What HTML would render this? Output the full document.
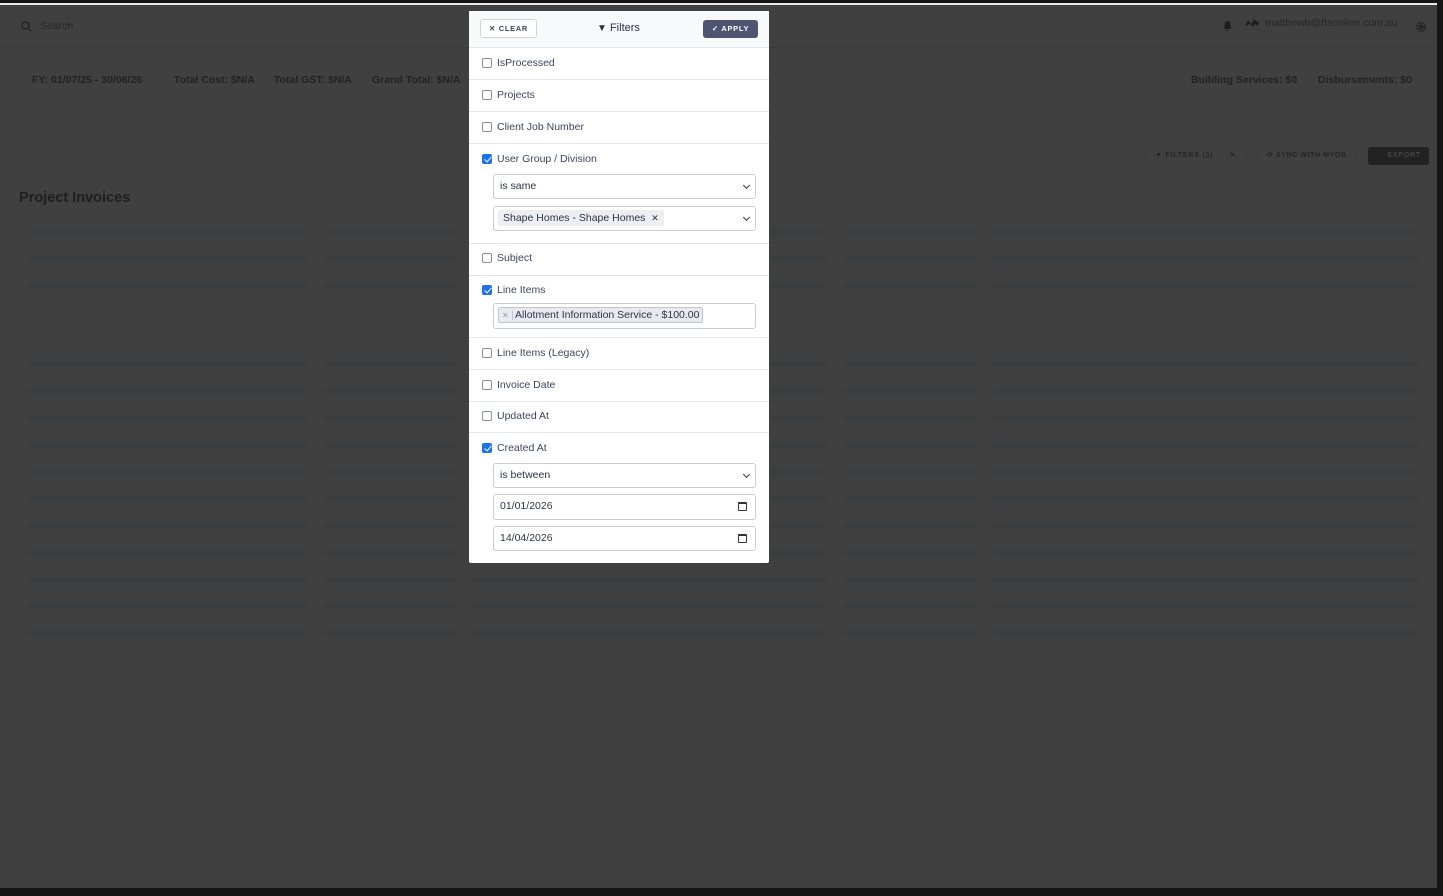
<!DOCTYPE html>
<html><head><meta charset="utf-8"><style>
*{box-sizing:border-box;margin:0;padding:0}
body{width:1443px;height:896px;background:#404040;font-family:"Liberation Sans",sans-serif;position:relative;overflow:hidden}
.a{position:absolute}
.bar{position:absolute;height:6px;border-radius:3px;background:#3c3d3f}
.sep{position:absolute;left:20px;width:1400px;height:1px;background:#3d3d3d}
.t{position:absolute;font-size:10.5px;font-weight:bold;color:#222;white-space:nowrap}
.m{position:absolute;left:469px;top:11px;width:300px;height:552px;background:#fff;border-radius:2px}
.row{position:absolute;left:0;width:300px;border-top:1px solid #e3e6ec}
.cb{position:absolute;left:13px;width:10px;height:10px;border:1px solid #8a8f99;border-radius:2px;background:#fff}
.cb.on{background:#1a73e8;border-color:#1a73e8}
.cb.on:after{content:"";position:absolute;left:2.5px;top:0px;width:3px;height:6px;border:solid #fff;border-width:0 1.5px 1.5px 0;transform:rotate(40deg)}
.lb{position:absolute;left:28px;font-size:10.5px;color:#3e4558;white-space:nowrap}
.inp{position:absolute;left:24px;width:263px;height:25px;border:1px solid #c9ccd3;border-radius:3px;font-size:10.5px;color:#2d3344;padding:0 6px;line-height:23px}
.chev{position:absolute;right:6px;top:8px;width:5px;height:5px;border:solid #333;border-width:0 1.3px 1.3px 0;transform:rotate(45deg)}
.cal{position:absolute;right:8px;top:7px;width:9px;height:9px;border:1.3px solid #333;border-top-width:2.5px;border-radius:1px}
</style></head><body>
<div class="a" style="left:0;top:0;width:1443px;height:3px;background:#151515"></div>
<div class="a" style="left:0;top:3px;width:1437px;height:2px;background:#e8e8e8"></div>
<div class="a" style="left:1437px;top:0;width:6px;height:896px;background:#151515"></div>
<div class="a" style="left:0;top:888px;width:1443px;height:8px;background:#151515"></div>

<svg class="a" style="left:21px;top:21px" width="11" height="11" viewBox="0 0 11 11"><circle cx="4.5" cy="4.5" r="3.5" fill="none" stroke="#222" stroke-width="1.3"/><path d="M7 7l3 3" stroke="#222" stroke-width="1.3"/></svg>
<div class="a" style="left:40px;top:20px;font-size:10.5px;color:#262626">Search</div>
<div class="a" style="left:0;top:47px;width:1437px;height:1px;background:#3b3b3b"></div>
<svg class="a" style="left:1222px;top:20px" width="11" height="12" viewBox="0 0 11 12"><path d="M5.5 1C3.5 1 2.5 2.5 2.5 4.5V7.5L1 9h9L8.5 7.5V4.5C8.5 2.5 7.5 1 5.5 1z M4.3 10a1.2 1.2 0 0 0 2.4 0z" fill="#1e1e1e"/></svg>
<svg class="a" style="left:1244px;top:18px" width="16" height="10" viewBox="0 0 16 10"><path d="M1 8L4 2l3 4 3-5 3 3 2-1-1 5-3-2-2 3-3-3z" fill="#1e1e1e"/></svg>
<div class="a" style="left:1265px;top:17px;font-size:10.5px;color:#262626">matthewb@ftsonline.com.au</div>
<svg class="a" style="left:1415px;top:21px" width="12" height="12" viewBox="0 0 12 12"><circle cx="6" cy="6" r="4" fill="none" stroke="#262626" stroke-width="2.5" stroke-dasharray="2 1.2"/><circle cx="6" cy="6" r="2.5" fill="#262626"/></svg>

<div class="a" style="left:20px;top:60px;width:1409px;height:41px;border:1px solid #3d3d3d;border-radius:3px"></div>
<div class="t" style="left:32px;top:74px">FY: 01/07/25 - 30/06/26</div>
<div class="t" style="left:174px;top:74px">Total Cost: $N/A</div>
<div class="t" style="left:274px;top:74px">Total GST: $N/A</div>
<div class="t" style="left:372px;top:74px">Grand Total: $N/A</div>
<div class="t" style="left:1191px;top:74px">Building Services: $0</div>
<div class="t" style="left:1318px;top:74px">Disbursements: $0</div>

<div class="a" style="left:1146px;top:147px;width:100px;height:18px;border:1px solid #3c3c3c;border-radius:3px;font-size:7px;letter-spacing:.8px;color:#242424;font-weight:bold;line-height:16px;padding-left:8px">▼ FILTERS (3) &nbsp;&nbsp;&nbsp;&nbsp;&nbsp;✕</div>
<div class="a" style="left:1258px;top:147px;width:99px;height:18px;border:1px solid #3c3c3c;border-radius:3px;font-size:7px;letter-spacing:.6px;color:#242424;font-weight:bold;line-height:16px;padding-left:8px">⟳ SYNC WITH MYOB</div>
<div class="a" style="left:1368px;top:147px;width:61px;height:18px;background:#222;border-radius:3px;font-size:7px;letter-spacing:.8px;color:#444;font-weight:bold;line-height:18px;text-align:right;padding-right:8px">EXPORT</div>

<div class="a" style="left:19px;top:190px;font-size:14.5px;font-weight:bold;color:#1f1f1f">Project Invoices</div>
<div class="sep" style="top:220px"></div>

<div id="rows"></div>
<script>
var h='',ys=[232,259,286,364,391,418,445,472,499,526,553,580,606,633];
var cols=[[27,281],[323,134],[472,355],[843,133],[993,426]];
ys.forEach(function(y){cols.forEach(function(c){h+='<div class="bar" style="left:'+c[0]+'px;top:'+(y-3)+'px;width:'+c[1]+'px"></div>'});h+='<div class="sep" style="top:'+(y+10)+'px"></div>'});
document.getElementById('rows').innerHTML=h;
</script>

<div class="m">
 <div class="a" style="left:0;top:0;width:300px;height:36px;background:#f8f9fb"></div>
 <div class="a" style="left:11px;top:8px;width:57px;height:19px;border:1px solid #d0d3da;border-radius:3px;background:#fff;font-size:7.5px;font-weight:bold;letter-spacing:.7px;color:#3e4558;line-height:17px;text-align:center">✕ CLEAR</div>
 <div class="a" style="left:128px;top:11px;font-size:11px;color:#2d3344"><span style="font-size:10px">▼</span> Filters</div>
 <div class="a" style="left:234px;top:9px;width:55px;height:18px;background:#4f5470;border-radius:3px;font-size:7.5px;font-weight:bold;letter-spacing:.7px;color:#fff;line-height:18px;text-align:center">✓ APPLY</div>

 <div class="row" style="top:36px;height:32px"><div class="cb" style="top:10px"></div><div class="lb" style="top:9px">IsProcessed</div></div>
 <div class="row" style="top:68px;height:32px"><div class="cb" style="top:10px"></div><div class="lb" style="top:9px">Projects</div></div>
 <div class="row" style="top:100px;height:32px"><div class="cb" style="top:10px"></div><div class="lb" style="top:9px">Client Job Number</div></div>
 <div class="row" style="top:132px;height:100px"><div class="cb on" style="top:10px"></div><div class="lb" style="top:9px">User Group / Division</div>
  <div class="inp" style="top:30px">is same<div class="chev"></div></div>
  <div class="inp" style="top:62px;padding-left:4px"><span style="background:#eceef2;padding:2px 5px;border-radius:2px">Shape Homes - Shape Homes &nbsp;<span style="font-size:9px">✕</span></span><div class="chev"></div></div>
 </div>
 <div class="row" style="top:232px;height:32px"><div class="cb" style="top:9px"></div><div class="lb" style="top:8px">Subject</div></div>
 <div class="row" style="top:264px;height:62px"><div class="cb on" style="top:9px"></div><div class="lb" style="top:8px">Line Items</div>
  <div class="inp" style="top:27px;height:26px;padding-left:4px;line-height:22px"><span style="background:#e8eaef;border:1px solid #c2c6ce;border-radius:2px;padding:1px 3px 1px 0;color:#2d3344"><span style="color:#999;padding:0 3px;border-right:1px solid #c2c6ce;font-size:8px">✕</span> Allotment Information Service - $100.00</span></div>
 </div>
 <div class="row" style="top:326px;height:32px"><div class="cb" style="top:10px"></div><div class="lb" style="top:9px">Line Items (Legacy)</div></div>
 <div class="row" style="top:358px;height:32px"><div class="cb" style="top:10px"></div><div class="lb" style="top:9px">Invoice Date</div></div>
 <div class="row" style="top:390px;height:32px"><div class="cb" style="top:9px"></div><div class="lb" style="top:8px">Updated At</div></div>
 <div class="row" style="top:421px;height:131px"><div class="cb on" style="top:10px"></div><div class="lb" style="top:9px">Created At</div>
  <div class="inp" style="top:30px">is between<div class="chev"></div></div>
  <div class="inp" style="top:61px;height:26px">01/01/2026<div class="cal"></div></div>
  <div class="inp" style="top:93px">14/04/2026<div class="cal"></div></div>
 </div>
</div>
</body></html>
